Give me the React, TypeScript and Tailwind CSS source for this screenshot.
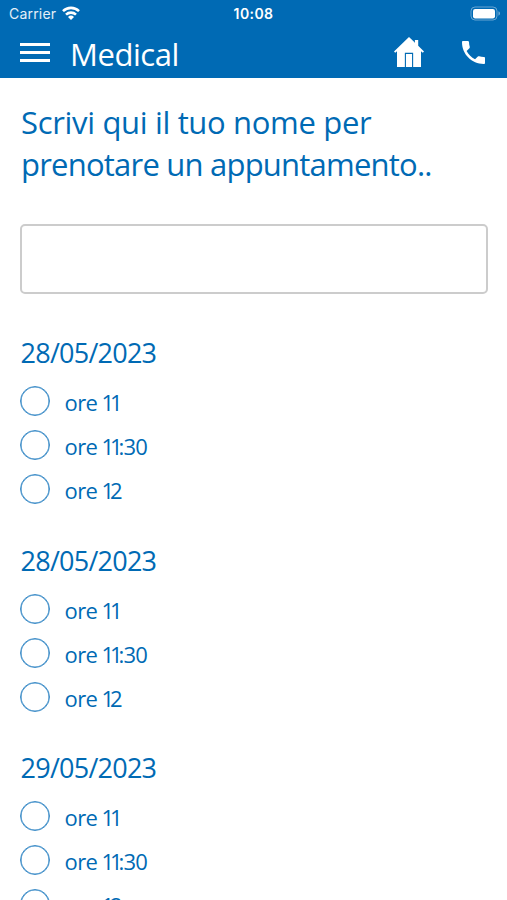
import React, { useState } from 'react';

const DAYS = [
    { id: 'a', date: '28/05/2023' },
    { id: 'b', date: '28/05/2023' },
    { id: 'c', date: '29/05/2023' },
];

// The leading ones are set tighter than the remaining digits
const SLOTS = [
    { ones: '11', rest: '' },
    { ones: '11', rest: ':30' },
    { ones: '1', rest: '2' },
];

function StatusBar() {
    return (
        <div className="grid h-[27px] grid-cols-3 items-center font-['Inter',sans-serif] text-white">
            <div className="flex items-center gap-[6px] pl-[9px]">
                <span className="text-[14px] leading-[27px] tracking-[0.2px] text-white/90">Carrier</span>
                <svg className="mb-px" width="18" height="14" viewBox="0 0 18 14" fill="none" stroke="currentColor" strokeWidth="2.6">
                    <path d="M1 5.1a11.6 11.6 0 0 1 16 0" />
                    <path d="M4 8.6a7.2 7.2 0 0 1 10 0" />
                    <path d="M9 14 6 11a4.3 4.3 0 0 1 6 0z" fill="currentColor" stroke="none" />
                </svg>
            </div>
            <span className="text-center text-[14px] font-semibold leading-[27px] tracking-[0.4px]">10:08</span>
            <div className="flex justify-end pr-[6px]">
                <svg className="mb-px" width="31" height="15" viewBox="0 0 31 15">
                    <rect x="1" y="1" width="26" height="13" rx="4" fill="none" stroke="white" strokeOpacity="0.4" />
                    <rect x="3" y="3" width="22" height="9.5" rx="2.2" fill="white" />
                    <path d="M28.5 5.3v4.4a2.4 2.4 0 0 0 0-4.4z" fill="white" fillOpacity="0.5" />
                </svg>
            </div>
        </div>
    );
}

function NavBar() {
    return (
        <div className="flex h-[51px] items-center pl-5 pr-[22px] text-white">
            <button className="flex w-[30px] flex-col gap-[5px]" aria-label="Menu">
                <span className="h-[3px] w-full bg-white" />
                <span className="h-[3px] w-full bg-white" />
                <span className="h-[3px] w-full bg-white" />
            </button>
            <h1 className="ml-5 flex-1 pt-[3px] text-[31px] leading-[48px] tracking-[-0.45px]">Medical</h1>
            <svg className="mb-[2px] mr-[38px]" width="30" height="30" viewBox="0 0 30 30">
                <path d="M15 0 20.5 5.2V3h3.7v5.7L30 14.5l-1.2 1.2L27 14.3V30H3V14.3l-1.8 1.4L0 14.5z" fill="white" />
                <path d="M11.4 30V16.4h7.2V30" fill="none" stroke="#006ab4" strokeWidth="1.1" />
                <path d="M20.5 5.4V3" stroke="#006ab4" strokeWidth="0.8" />
            </svg>
            <svg width="23" height="23" viewBox="3 3 18 18" fill="white">
                <path d="M6.62 10.79c1.44 2.83 3.76 5.14 6.59 6.59l2.2-2.2c.27-.27.67-.36 1.02-.24 1.12.37 2.33.57 3.57.57.55 0 1 .1 1 .6V20.4c0 .4-.45.6-1 .6-9.39 0-17-7.61-17-17 0-.55.2-1 .7-1h3.8c.55 0 1 .45 1 1 0 1.25.2 2.45.57 3.57.11.35.03.74-.25 1.02l-2.2 2.2z" />
            </svg>
        </div>
    );
}

function DayGroup({ id, date }: { id: string; date: string }) {
    const [selected, setSelected] = useState<number | null>(null);

    return (
        <section className="h-[207.7px]">
            <h3 className="mb-[15px] pl-[0.5px] text-[27px] leading-[36px] tracking-[-0.75px]">{date}</h3>
            {SLOTS.map((slot, i) => (
                <label key={i} className="flex h-[44px] items-start gap-[14.5px]">
                    <input
                        type="radio"
                        name={id}
                        checked={selected === i}
                        onChange={() => setSelected(i)}
                        className="size-[30px] shrink-0 appearance-none rounded-full border border-[#3d8dc8] bg-white shadow-[inset_0_0_0_0.6px_#3d8dc8] checked:border-8"
                    />
                    <span className="text-[22px] leading-[32px] tracking-[-0.8px]">
                        <span className="tracking-[-0.6px]">ore</span>
                        <span className="tracking-[-1.6px]"> </span>
                        <span className="tracking-[-4px]">{slot.ones}</span>
                        {slot.rest}
                    </span>
                </label>
            ))}
        </section>
    );
}

export default function App() {
    return (
        <div className="h-[900px] w-full overflow-hidden bg-white font-['Open_Sans','Noto_Sans',sans-serif] text-[#006ab4]">
            <header className="h-[78px] bg-[#006ab4]">
                <StatusBar />
                <NavBar />
            </header>
            <main className="px-5 pt-[23px]">
                <h2 className="whitespace-nowrap pl-px text-[31px] leading-[42px]">
                    <span className="block tracking-[-0.33px]">Scrivi qui il tuo nome per</span>
                    <span className="block tracking-[-0.78px]">prenotare un appuntamento..</span>
                </h2>
                <input
                    type="text"
                    className="mb-[41px] mt-[39px] block h-[70px] w-[468px] rounded-[5px] border-2 border-[#cccccc] px-4 text-[22px] outline-none"
                />
                {DAYS.map((day) => (
                    <DayGroup key={day.id} id={day.id} date={day.date} />
                ))}
            </main>
        </div>
    );
}
